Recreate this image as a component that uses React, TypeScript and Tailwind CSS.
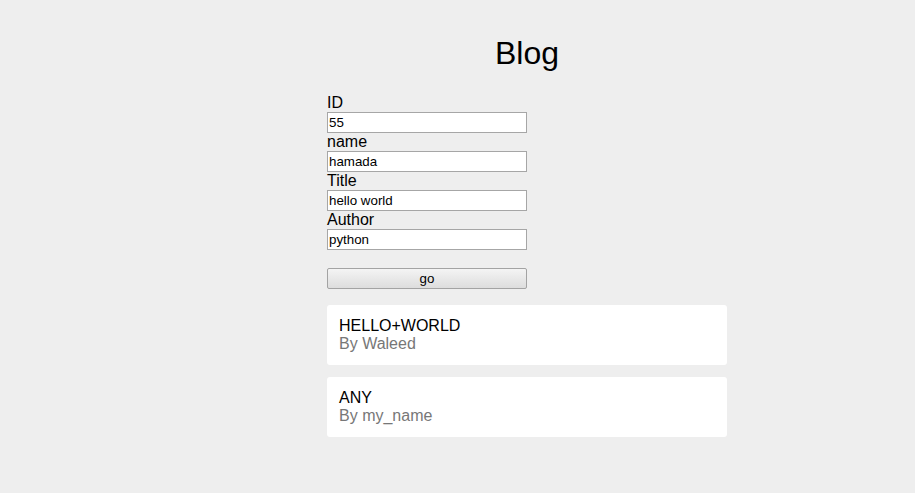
import React from 'react';

type Post = { title: string; author: string };

const posts: Post[] = [
  { title: 'HELLO+WORLD', author: 'Waleed' },
  { title: 'ANY', author: 'my_name' },
];

const fields = [
  { label: 'ID', value: '55' },
  { label: 'name', value: 'hamada' },
  { label: 'Title', value: 'hello world' },
  { label: 'Author', value: 'python' },
];

export default function App() {
  return (
    <div className="min-h-[493px] w-full bg-[#eeeeee] font-['Liberation_Sans',Arial,sans-serif] text-black">
      <div className="ml-[327px] w-[400px] pt-[35px]">
        <h1 className="mb-[22px] text-center text-[32px] leading-[37px] font-normal">Blog</h1>

        <form className="flex flex-col" onSubmit={e => e.preventDefault()}>
          {fields.map(f => (
            <label key={f.label} className="flex flex-col">
              <span className="text-[16px] leading-[18px]">{f.label}</span>
              <input
                defaultValue={f.value}
                className="h-[21px] w-[200px] border border-[#a6a6a6] bg-white px-[1px] text-[13.33px] leading-none text-black outline-none"
              />
            </label>
          ))}
          <button
            type="submit"
            className="mt-[18px] h-[21px] w-[200px] rounded-[2px] border border-[#a3a3a3] bg-linear-to-b from-[#f4f4f4] to-[#dddddd] text-[13.33px] leading-none text-black"
          >
            go
          </button>
        </form>

        <div className="mt-4 flex flex-col gap-3">
          {posts.map(p => (
            <div key={p.title} className="rounded-[3px] bg-white px-3 py-3 text-[16px] leading-[18px]">
              <div className="text-black">{p.title}</div>
              <div className="text-[#777777]">By {p.author}</div>
            </div>
          ))}
        </div>
      </div>
    </div>
  );
}
